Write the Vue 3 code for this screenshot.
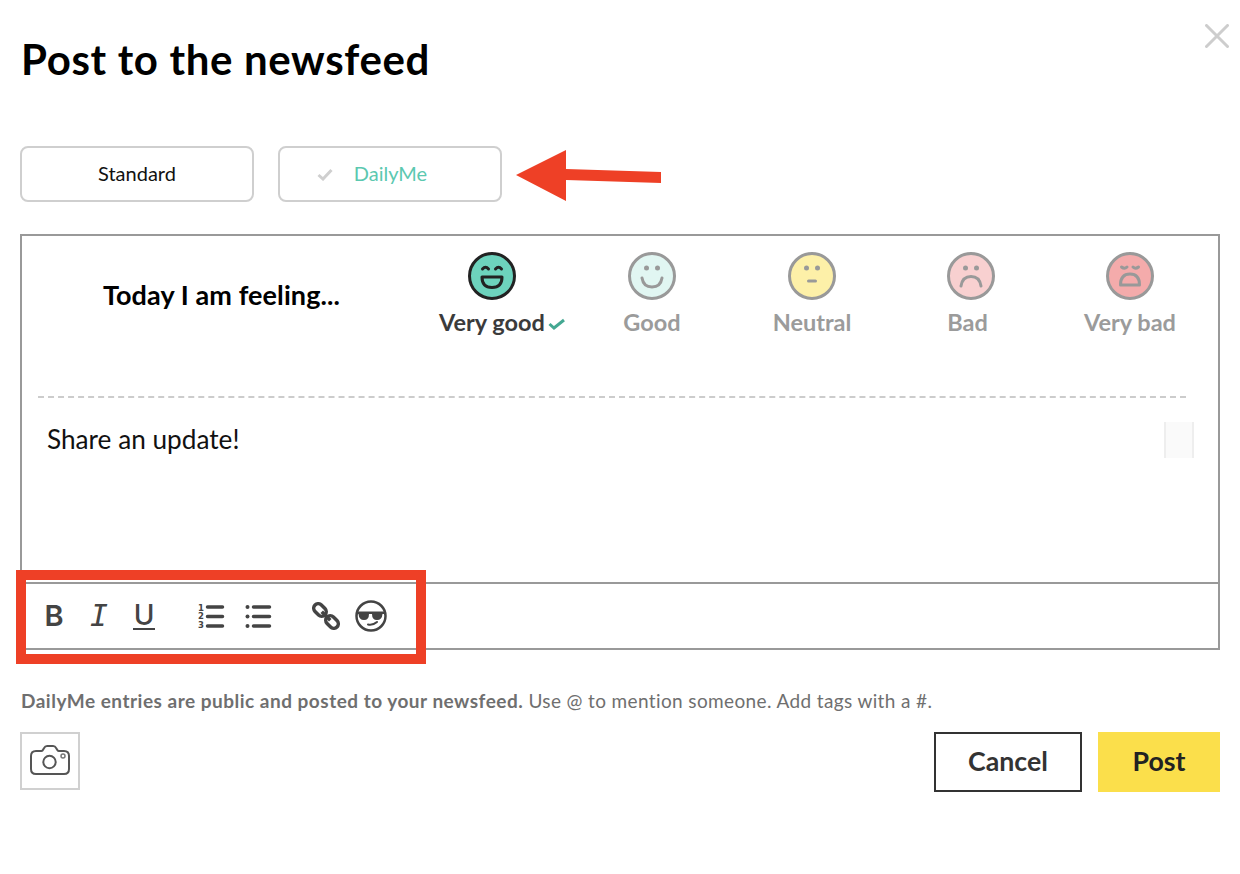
<script setup>
const feelings = [
  { key: 'vgood', label: 'Very good', fill: '#6dd3bd', active: true },
  { key: 'good', label: 'Good', fill: '#e1f6f2' },
  { key: 'neutral', label: 'Neutral', fill: '#fdf0a8' },
  { key: 'bad', label: 'Bad', fill: '#f8d0d0' },
  { key: 'vbad', label: 'Very bad', fill: '#f4abab' }
]
</script>

<template>
  <div class="modal">
    <svg class="close" width="24" height="24" viewBox="0 0 24 24" aria-label="Close">
      <path d="M1.5 1.5l21 21M22.5 1.5l-21 21" fill="none" stroke="#cdcdcd" stroke-width="3" stroke-linecap="round" />
    </svg>

    <h1 class="title">Post to the newsfeed</h1>

    <div class="tabs">
      <button class="tab tab-standard">Standard</button>
      <button class="tab tab-daily">
        <svg class="tab-check" width="16" height="13" viewBox="0 0 16 13">
          <path d="M1.5 7l4.500 4L14.500 2" fill="none" stroke="#cfcfcf" stroke-width="3" />
        </svg>
        <span>DailyMe</span>
      </button>
    </div>

    <section class="editor">
      <div class="feelings">
        <div class="prompt">Today I am feeling...</div>
        <div v-for="f in feelings" :key="f.key" class="feeling" :class="[f.key, { active: f.active }]">
          <svg width="48" height="48" viewBox="0 0 48 48">
            <circle cx="24" cy="24" r="22.500" :fill="f.fill" :stroke="f.active ? '#222222' : '#999999'" stroke-width="3" />
            <g v-if="f.key === 'vgood'" fill="none" stroke="#222222" stroke-width="3" stroke-linecap="round">
              <path d="M14.500 17q3-3.500 6 0M27.500 17q3-3.500 6 0" />
              <path d="M14 25h20q0 10.500-10 10.500t-10-10.500z" stroke-linejoin="round" />
            </g>
            <g v-else-if="f.key === 'good'">
              <circle cx="18.500" cy="16" r="2.500" fill="#999999" />
              <circle cx="29.500" cy="16" r="2.500" fill="#999999" />
              <path d="M14 26q1.500 9 10 9t10-9" fill="none" stroke="#999999" stroke-width="3" stroke-linecap="round" />
            </g>
            <g v-else-if="f.key === 'neutral'">
              <circle cx="18.500" cy="16" r="2.500" fill="#999999" />
              <circle cx="29.500" cy="16" r="2.500" fill="#999999" />
              <path d="M20.500 29h7" fill="none" stroke="#999999" stroke-width="3" stroke-linecap="round" />
            </g>
            <g v-else-if="f.key === 'bad'">
              <circle cx="18.500" cy="16" r="2.500" fill="#999999" />
              <circle cx="29.500" cy="16" r="2.500" fill="#999999" />
              <path d="M14 34q1.500-9.500 10-9.500t10 9.500" fill="none" stroke="#999999" stroke-width="3" stroke-linecap="round" />
            </g>
            <g v-else fill="none" stroke="#999999" stroke-width="3" stroke-linecap="round" stroke-linejoin="round">
              <path d="M15.500 15q3 2.500 5.500 0M27 15q2.500 2.500 5.500 0" />
              <path d="M14.500 33q0-11 9.500-11t9.500 11z" />
            </g>
          </svg>
          <div class="feeling-label">
            {{ f.label }}
            <svg v-if="f.active" class="label-check" width="18" height="12" viewBox="0 0 18 12">
              <path d="M1.500 6l4.500 4L16 2" fill="none" stroke="#44a892" stroke-width="3" />
            </svg>
          </div>
        </div>
      </div>

      <div class="body">
        <div class="body-text">Share an update!</div>
        <div class="grip"></div>
      </div>

      <div class="toolbar">
        <div class="tool-group">
          <span class="glyph glyph-b">B</span>
          <span class="glyph glyph-i">I</span>
          <span class="glyph glyph-u">U</span>
        </div>
        <div class="tool-group lists">
          <svg width="27" height="26" viewBox="0 0 27 26">
            <g class="nums">
              <text x="0" y="7.500">1</text>
              <text x="0" y="16">2</text>
              <text x="0" y="25">3</text>
            </g>
            <path d="M9.500 4h15M9.500 13.500h15M9.500 23h15" fill="none" stroke="#444444" stroke-width="3.500" stroke-linecap="round" />
          </svg>
          <svg width="27" height="26" viewBox="0 0 27 26">
            <circle cx="2.500" cy="4" r="2" fill="#444444" />
            <circle cx="2.500" cy="13.500" r="2" fill="#444444" />
            <circle cx="2.500" cy="23" r="2" fill="#444444" />
            <path d="M8.500 4h16M8.500 13.500h16M8.500 23h16" fill="none" stroke="#444444" stroke-width="3.500" stroke-linecap="round" />
          </svg>
        </div>
        <div class="tool-group extras">
          <svg width="28" height="28" viewBox="0 0 28 28">
            <g fill="none" stroke="#444444" stroke-width="3.500" transform="rotate(45 14 14)">
              <rect x="-1.500" y="9.500" width="14" height="9" rx="4.500" />
              <rect x="15.500" y="9.500" width="14" height="9" rx="4.500" />
              <path d="M8 14h12" />
            </g>
          </svg>
          <svg width="32" height="32" viewBox="0 0 32 32">
            <circle cx="16" cy="16" r="14.500" fill="none" stroke="#444444" stroke-width="2.500" />
            <path d="M3 11.500h26v2.500h-1.500q-.5 6-5.500 6t-5-6h-3q0 6-5 6t-5.500-6H3z" fill="#444444" />
            <path d="M13 24.500q5 1 9-2.500" fill="none" stroke="#444444" stroke-width="2" stroke-linecap="round" />
          </svg>
        </div>
      </div>
    </section>

    <p class="help"><b>DailyMe entries are public and posted to your newsfeed.</b> Use @ to mention someone. Add tags with a #.</p>

    <div class="actions">
      <button class="camera" aria-label="Add photo">
        <svg width="40" height="30" viewBox="0 0 40 30">
          <path d="M6 6h5.500q1 0 2-2l.6-1q1-2 3-2h6q2 0 3 2l.6 1q1 2 2 2H34q5 0 5 5v13q0 5-5 5H6q-5 0-5-5V11q0-5 5-5z" fill="none" stroke="#555555" stroke-width="2" />
          <circle cx="19.500" cy="17" r="6.200" fill="none" stroke="#555555" stroke-width="2" />
          <circle cx="33" cy="11" r="2" fill="none" stroke="#777777" stroke-width="1.500" />
        </svg>
      </button>
      <div class="spacer"></div>
      <button class="btn btn-cancel">Cancel</button>
      <button class="btn btn-post">Post</button>
    </div>

    <svg class="arrow" width="150" height="56" viewBox="0 0 150 56">
      <path d="M0 25L50 0V19L145 22V33L50 30V51Z" fill="#ee4026" />
    </svg>
    <div class="highlight"></div>
  </div>
</template>

<style>
html, body { margin: 0; background: #ffffff; }
</style>

<style scoped>
.modal {
  position: relative;
  width: 1240px;
  height: 874px;
  box-sizing: border-box;
  padding: 0 20px;
  background: #ffffff;
  font-family: Lato, "Noto Sans", sans-serif;
  color: #000000;
  overflow: hidden;
}
button { font-family: inherit; cursor: pointer; }
.close { position: absolute; left: 1205px; top: 24px; }
.title {
  margin: 0;
  padding: 34px 0 0 1px;
  height: 146px;
  box-sizing: border-box;
  font-size: 42px;
  letter-spacing: 0.65px;
  line-height: 50px;
  font-weight: 700;
}
.tabs { display: flex; gap: 24px; }
.tab {
  height: 56px;
  border: 2px solid #cfcfcf;
  border-radius: 8px;
  background: #ffffff;
  font-size: 20px;
  display: flex;
  align-items: center;
  justify-content: center;
  padding: 0 0 3px;
}
.tab-standard { width: 234px; color: #111111; }
.tab-daily { width: 224px; color: #5cc8b0; gap: 21px; padding-right: 36px; }
.tab-check { margin-top: 3px; }
.editor {
  margin-top: 32px;
  height: 416px;
  box-sizing: border-box;
  border: 2px solid #999999;
  display: flex;
  flex-direction: column;
}
.feelings {
  display: grid;
  grid-template-columns: 390px 160px 160px 160px 158px 160px;
  align-items: start;
  height: 160px;
  padding-top: 16px;
  box-sizing: border-box;
}
.prompt {
  font-size: 27px;
  letter-spacing: 0.1px;
  font-weight: 700;
  line-height: 32px;
  text-align: center;
  padding-left: 9px;
  padding-top: 27px;
}
.feeling {
  display: flex;
  flex-direction: column;
  align-items: center;
  color: #9b9b9b;
}
.feeling.active { color: #3b3b3b; }
.feeling-label {
  position: relative;
  margin-top: 7px;
  font-size: 23.500px;
  line-height: 30px;
  font-weight: 700;
  white-space: nowrap;
}
.feeling.bad .feeling-label { margin-right: 7px; }
.label-check { position: absolute; left: 100%; top: 11px; margin-left: 3px; }
.body {
  flex: 1;
  margin: 0 32px 0 16px;
  border-top: 2px dashed #cccccc;
  display: flex;
  justify-content: space-between;
  align-items: flex-start;
  padding: 24px 0 0 9px;
}
.body-text { font-size: 26.200px; line-height: 34px; color: #111111; }
.grip {
  width: 26px;
  height: 36px;
  margin-right: -8px;
  background: #fafafa;
  border-left: 2px solid #eeeeee;
  border-right: 2px solid #eeeeee;
}
.toolbar {
  height: 66px;
  flex-shrink: 0;
  box-sizing: border-box;
  border-top: 2px solid #999999;
  display: flex;
  align-items: center;
  padding-left: 22px;
  color: #444444;
}
.tool-group { display: flex; align-items: center; }
.glyph { display: block; text-align: center; line-height: 26px; color: #444444; }
.glyph-b { width: 20px; font-family: Inter, sans-serif; font-weight: 600; font-size: 29px; }
.glyph-i { width: 22px; margin-left: 24px; font-family: "DejaVu Sans Mono", monospace; font-style: italic; font-weight: 400; font-size: 30px; }
.glyph-u {
  width: 22px;
  margin-left: 23px;
  font-family: Inter, sans-serif;
  font-weight: 500;
  font-size: 28px;
  border-bottom: 2px solid #444444;
  height: 25px;
  line-height: 24px;
}
.lists { margin-left: 43px; gap: 20px; }
.nums text { font: 700 8.500px "DejaVu Sans", sans-serif; fill: #444444; }
.extras { margin-left: 40px; gap: 15px; }
.help {
  margin: 41px 0 0;
  padding-left: 1px;
  height: 20px;
  font-size: 19px;
  letter-spacing: 0.37px;
  line-height: 20px;
  color: #6f6f6f;
}
.help b { letter-spacing: 0.5px; }
.actions { display: flex; margin-top: 21px; gap: 16px; }
.camera {
  width: 60px;
  height: 58px;
  border: 2px solid #d0d0d0;
  background: #ffffff;
  padding: 0 0 2px;
  display: flex;
  align-items: center;
  justify-content: center;
}
.spacer { flex: 1; }
.btn { height: 60px; font-size: 26.700px; font-weight: 700; color: #333333; padding: 0 0 3px; }
.btn-cancel { width: 148px; border: 2px solid #333333; background: #ffffff; }
.btn-post { width: 122px; border: none; background: #fbdf4b; color: #222222; }
.arrow { position: absolute; left: 516px; top: 150px; }
.highlight {
  position: absolute;
  left: 16px;
  top: 570px;
  width: 410px;
  height: 94px;
  box-sizing: border-box;
  border: 10px solid #ee4026;
}
</style>
